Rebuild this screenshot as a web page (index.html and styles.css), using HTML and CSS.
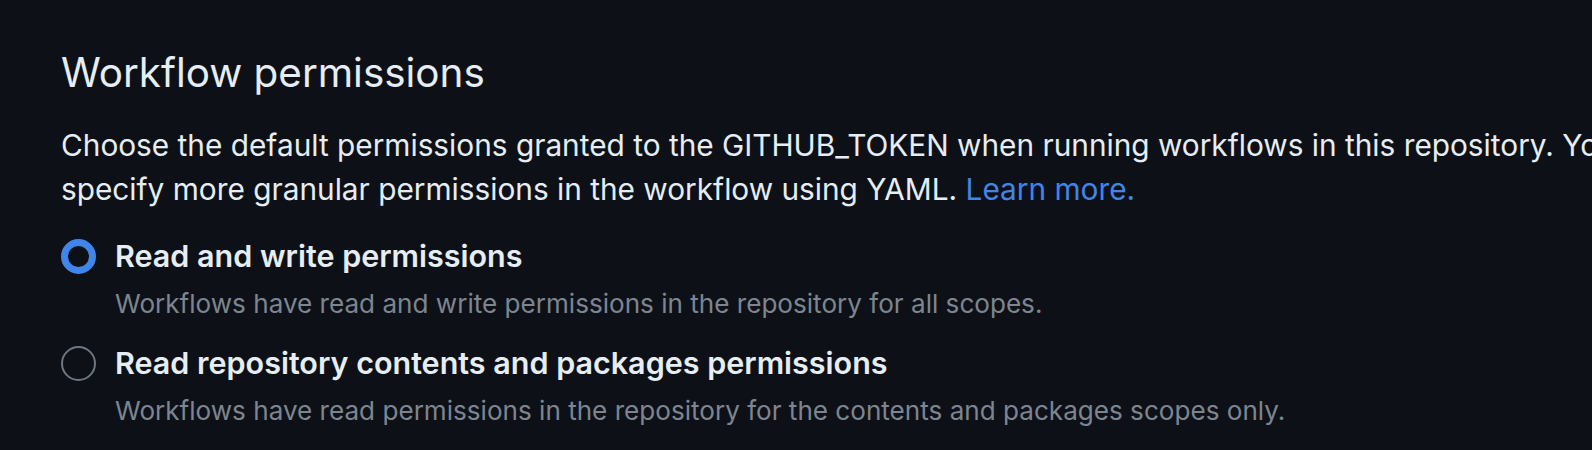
FILE: index.html
```html
<!DOCTYPE html>
<html lang="en">
<head>
<meta charset="utf-8">
<title>Workflow permissions</title>
<link rel="stylesheet" href="styles.css">
</head>
<body>
<main class="page">
  <h2 class="heading">Workflow permissions</h2>
  <p class="intro">Choose the default permissions granted to the GITHUB_TOKEN when running workflows in this repository. You can<br>specify more granular permissions in the workflow using YAML. <a class="link" href="#">Learn more.</a></p>
  <div class="options">
    <label class="option">
      <span class="radio radio-checked"></span>
      <span class="option-body">
        <span class="option-title">Read and write permissions</span>
        <span class="option-note">Workflows have read and write permissions in the repository for all scopes.</span>
      </span>
    </label>
    <label class="option">
      <span class="radio"></span>
      <span class="option-body">
        <span class="option-title">Read repository contents and packages permissions</span>
        <span class="option-note">Workflows have read permissions in the repository for the contents and packages scopes only.</span>
      </span>
    </label>
  </div>
</main>
</body>
</html>
```

FILE: styles.css
```css
html, body {
  margin: 0;
  padding: 0;
  background: #0d1117;
  overflow: hidden;
}

body {
  font-family: Inter, "Liberation Sans", sans-serif;
  color: #e6edf3;
}

.page {
  width: 1800px;
  padding: 46.5px 0 0 61px;
}

.heading {
  margin: 0;
  font-size: 40.4px;
  line-height: 52px;
  font-weight: 400;
  color: #e6edf3;
}

.intro {
  margin: 24px 0 0;
  font-size: 29.8px;
  line-height: 44px;
  white-space: nowrap;
}

.link {
  color: #4285e8;
  text-decoration: none;
}

.options {
  margin-top: 23px;
  display: flex;
  flex-direction: column;
  gap: 17.5px;
}

.option {
  display: flex;
  align-items: flex-start;
  gap: 19px;
}

.radio {
  flex: none;
  box-sizing: border-box;
  width: 35px;
  height: 35px;
  margin-top: 5px;
  border-radius: 50%;
  border: 2px solid #6e7681;
}

.radio-checked {
  border: 7px solid #4285e8;
}

.option-body {
  display: flex;
  flex-direction: column;
  gap: 7.5px;
}

.option-title {
  font-size: 30.5px;
  line-height: 44px;
  font-weight: 600;
  color: #e6edf3;
}

.option-note {
  font-size: 26.1px;
  line-height: 38px;
  color: #7d8590;
}
```
